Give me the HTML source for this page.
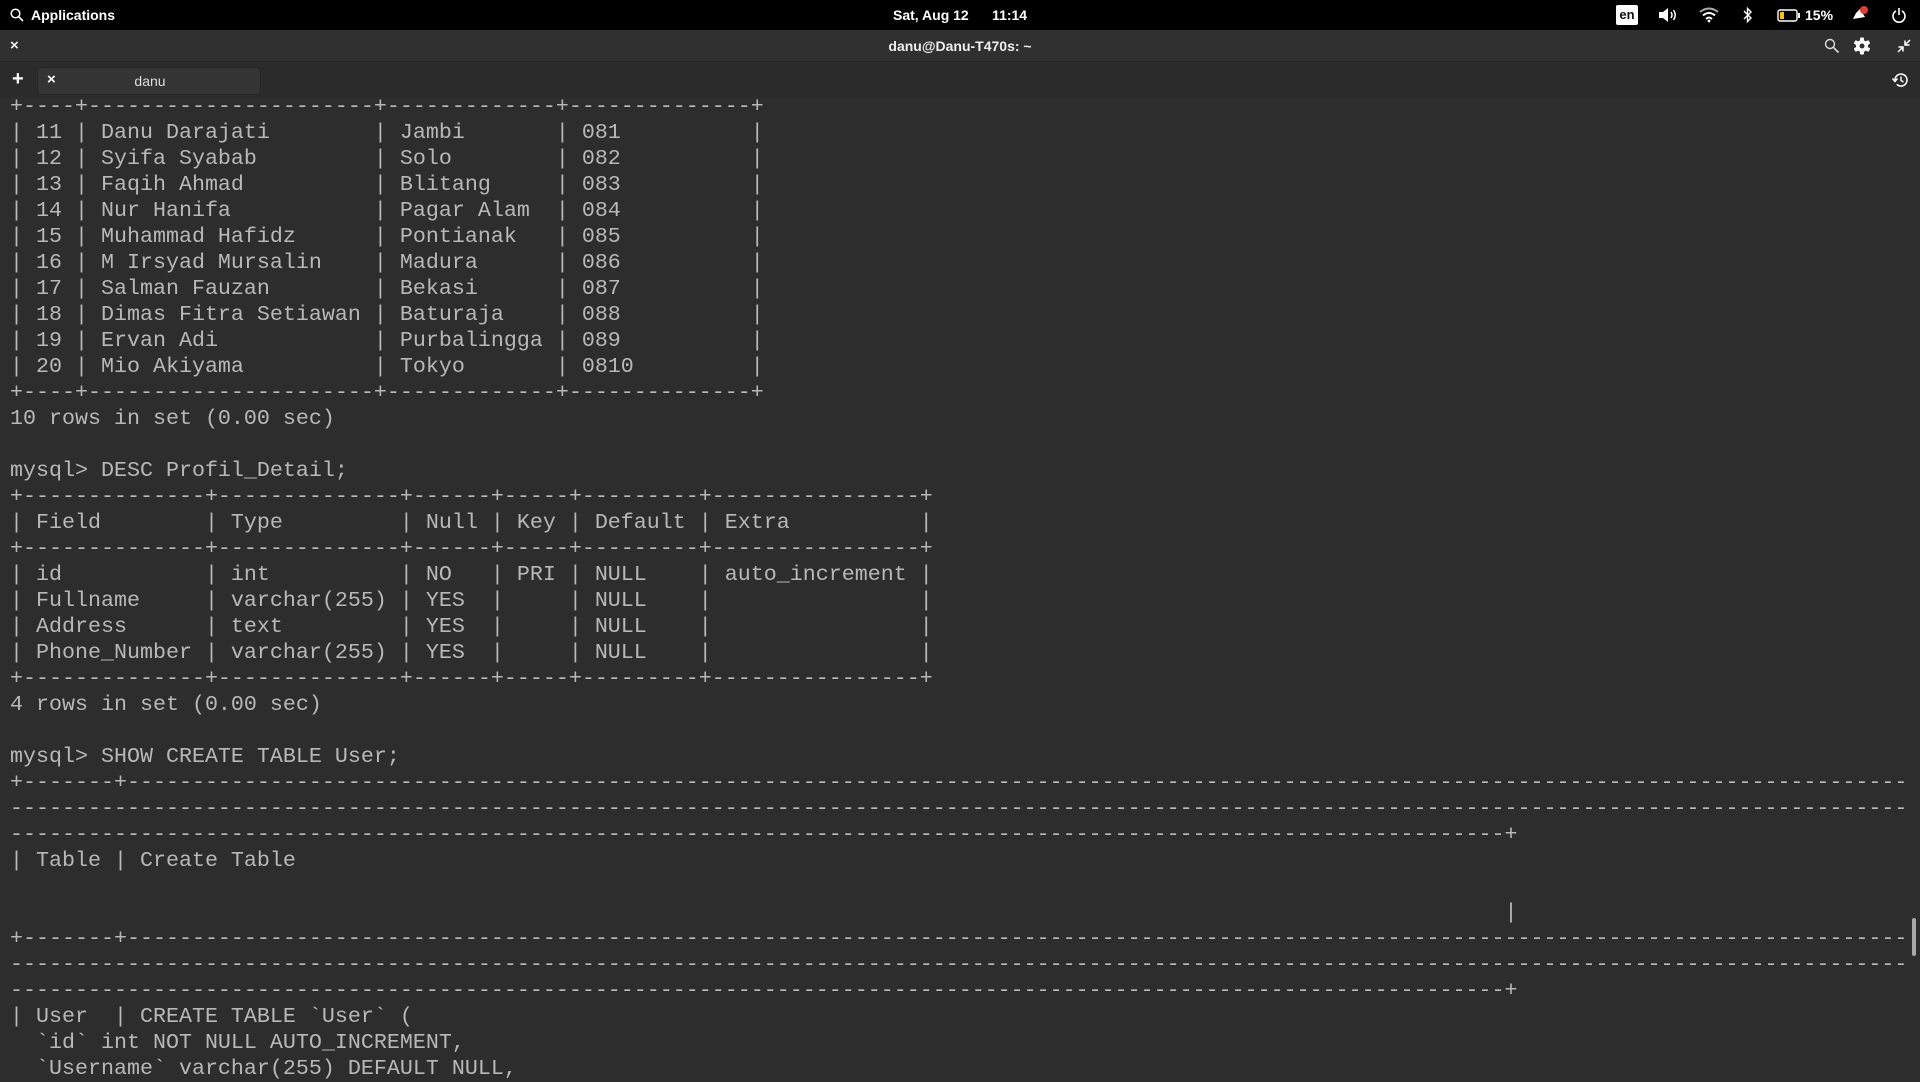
<!DOCTYPE html>
<html><head><meta charset="utf-8"><style>
*{margin:0;padding:0;box-sizing:border-box}
body{width:1920px;height:1080px;overflow:hidden;background:#2d2d2d;font-family:"Liberation Sans",sans-serif;position:relative}
#top{position:absolute;left:0;top:0;width:1920px;height:30px;background:#000;color:#fff;font-weight:bold;font-size:14px}
#title{position:absolute;left:0;top:30px;width:1920px;height:32px;background:#303030;color:#eee;font-weight:bold;font-size:14px;border-bottom:1px solid #222}
#tabs{position:absolute;left:0;top:63px;width:1920px;height:34px;background:#2b2b2b}
.tab{position:absolute;left:37px;top:4px;width:224px;height:28px;background:#343434;border-radius:4px;border:1px solid #262626}
#term{position:absolute;left:10px;top:94px;width:1898px;overflow:hidden;font-family:"Liberation Mono",monospace;font-size:21.667px;line-height:26px;color:#b8b8b8;white-space:pre}
.a{position:absolute}
</style></head><body>
<div id="top">
<svg class="a" style="left:10px;top:8px" width="14" height="14" viewBox="0 0 14 14"><circle cx="5.5" cy="5.5" r="4.3" fill="none" stroke="#fff" stroke-width="1.5"/><path d="M8.6 8.6L13 13" stroke="#fff" stroke-width="1.6"/></svg>
<div class="a" style="left:31px;top:7px">Applications</div>
<div class="a" style="left:893px;top:7px">Sat, Aug 12&nbsp;&nbsp;&nbsp;&nbsp;&nbsp;&nbsp;11:14</div>
<div class="a" style="left:1616px;top:5px;width:22px;height:20px;background:#fff;color:#111;border-radius:2px;text-align:center;line-height:20px;font-size:13px">en</div>
<svg class="a" style="left:1658px;top:7px" width="20" height="16" viewBox="0 0 20 16"><path d="M1 5h4l5-4v14l-5-4H1z" fill="#fff"/><path d="M13 5q2 3 0 6M15.5 3q3.5 5 0 10" stroke="#fff" stroke-width="1.5" fill="none"/></svg>
<svg class="a" style="left:1699px;top:7px" width="20" height="16" viewBox="0 0 20 16"><path d="M1 5q9-7 18 0" stroke="#aaa" stroke-width="2" fill="none"/><path d="M4 8.5q6-5 12 0" stroke="#fff" stroke-width="2" fill="none"/><path d="M7 12q3-3 6 0" stroke="#fff" stroke-width="2" fill="none"/><circle cx="10" cy="14" r="1.4" fill="#fff"/></svg>
<svg class="a" style="left:1743px;top:6px" width="10" height="18" viewBox="0 0 10 18"><path d="M1 5l7 7-3.5 3.5V2.5L8 6 1 13" stroke="#fff" stroke-width="1.4" fill="none"/></svg>
<svg class="a" style="left:1777px;top:9px" width="24" height="13" viewBox="0 0 24 13"><rect x="1" y="1" width="19" height="11" rx="2" fill="none" stroke="#fff" stroke-width="1.4"/><rect x="3" y="3" width="4" height="7" fill="#f5c400"/><rect x="21" y="4" width="2" height="5" fill="#fff"/></svg>
<div class="a" style="left:1805px;top:7px">15%</div>
<svg class="a" style="left:1851px;top:5px" width="18" height="19" viewBox="0 0 18 19"><path d="M2 14l3-6 4-4 5 8z" fill="#fff"/><circle cx="13" cy="5" r="4" fill="#e53935"/></svg>
<svg class="a" style="left:1892px;top:7px" width="14" height="16" viewBox="0 0 14 16"><path d="M4 4a6 6 0 1 0 6 0" stroke="#fff" stroke-width="1.6" fill="none"/><path d="M7 1v7" stroke="#fff" stroke-width="1.6"/></svg>
</div>
<div id="title">
<div class="a" style="left:10px;top:7px;font-size:15px">×</div>
<div class="a" style="left:0;width:1920px;text-align:center;top:8px">danu@Danu-T470s: ~</div>
<svg class="a" style="left:1824px;top:8px" width="16" height="16" viewBox="0 0 16 16"><circle cx="6" cy="6" r="4.5" fill="none" stroke="#ddd" stroke-width="1.4"/><path d="M9.3 9.3L14.5 14.5" stroke="#ddd" stroke-width="1.6"/></svg>
<svg class="a" style="left:1852px;top:6px" width="20" height="20" viewBox="0 0 20 20"><g fill="#fff"><circle cx="10" cy="10" r="6"/><rect x="8" y="1.5" width="4" height="17" rx="1"/><rect x="8" y="1.5" width="4" height="17" rx="1" transform="rotate(60 10 10)"/><rect x="8" y="1.5" width="4" height="17" rx="1" transform="rotate(120 10 10)"/></g><circle cx="10" cy="10" r="2.5" fill="#303030"/></svg>
<svg class="a" style="left:1897px;top:9px" width="14" height="14" viewBox="0 0 14 14"><path d="M13 1L8.5 5.5M8 1.5v4.5h4.5M1 13l4.5-4.5M1.5 8H6v4.5" stroke="#fff" stroke-width="1.5" fill="none"/></svg>
</div>
<div id="tabs">
<div class="a" style="left:12px;top:5px;color:#fff;font-size:20px;font-weight:bold">+</div>
<div class="tab"><div class="a" style="left:9px;top:3px;color:#fff;font-size:15px;font-weight:bold">×</div><div class="a" style="left:0;width:224px;text-align:center;top:5px;color:#ddd;font-size:14px">danu</div></div>
<svg class="a" style="left:1892px;top:9px" width="17" height="16" viewBox="0 0 17 16"><path d="M3 8a6 6 0 1 1 1.8 4.3" stroke="#fff" stroke-width="1.5" fill="none"/><path d="M0.5 6.5L3 9.5 5.5 6.5" stroke="#fff" stroke-width="1.4" fill="none"/><path d="M9 4.5V8.5l2.5 1.5" stroke="#fff" stroke-width="1.4" fill="none"/></svg>
</div>
<div class="a" style="left:1912px;top:918px;width:4px;height:38px;background:#a8a8a8;border-radius:2px"></div>
<div id="term">+----+----------------------+-------------+--------------+
| 11 | Danu Darajati        | Jambi       | 081          |
| 12 | Syifa Syabab         | Solo        | 082          |
| 13 | Faqih Ahmad          | Blitang     | 083          |
| 14 | Nur Hanifa           | Pagar Alam  | 084          |
| 15 | Muhammad Hafidz      | Pontianak   | 085          |
| 16 | M Irsyad Mursalin    | Madura      | 086          |
| 17 | Salman Fauzan        | Bekasi      | 087          |
| 18 | Dimas Fitra Setiawan | Baturaja    | 088          |
| 19 | Ervan Adi            | Purbalingga | 089          |
| 20 | Mio Akiyama          | Tokyo       | 0810         |
+----+----------------------+-------------+--------------+
10 rows in set (0.00 sec)

mysql> DESC Profil_Detail;
+--------------+--------------+------+-----+---------+----------------+
| Field        | Type         | Null | Key | Default | Extra          |
+--------------+--------------+------+-----+---------+----------------+
| id           | int          | NO   | PRI | NULL    | auto_increment |
| Fullname     | varchar(255) | YES  |     | NULL    |                |
| Address      | text         | YES  |     | NULL    |                |
| Phone_Number | varchar(255) | YES  |     | NULL    |                |
+--------------+--------------+------+-----+---------+----------------+
4 rows in set (0.00 sec)

mysql> SHOW CREATE TABLE User;
+-------+-------------------------------------------------------------------------------------------------------------------------------------------
--------------------------------------------------------------------------------------------------------------------------------------------------
-------------------------------------------------------------------------------------------------------------------+
| Table | Create Table

                                                                                                                   |
+-------+-------------------------------------------------------------------------------------------------------------------------------------------
--------------------------------------------------------------------------------------------------------------------------------------------------
-------------------------------------------------------------------------------------------------------------------+
| User  | CREATE TABLE `User` (
  `id` int NOT NULL AUTO_INCREMENT,
  `Username` varchar(255) DEFAULT NULL,</div>
</body></html>
